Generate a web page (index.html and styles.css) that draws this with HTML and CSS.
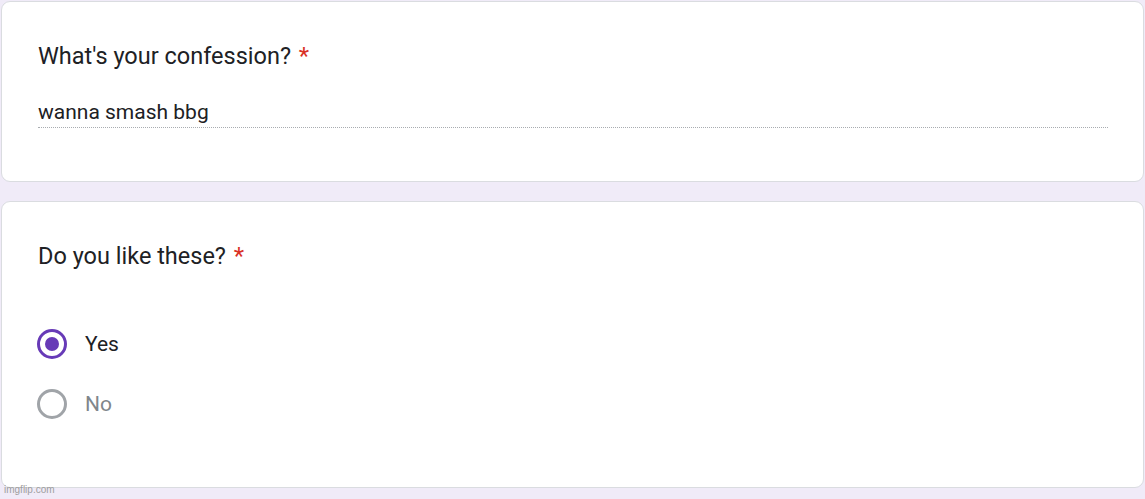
FILE: index.html
```html
<!DOCTYPE html>
<html>
<head>
<meta charset="utf-8">
<link rel="stylesheet" href="styles.css">
</head>
<body>
<div class="page">
  <div class="card card-text">
    <div class="title">What's your confession? <span class="req">*</span></div>
    <div class="answer">wanna smash bbg</div>
  </div>
  <div class="card card-radio">
    <div class="title">Do you like these? <span class="req">*</span></div>
    <div class="options">
      <div class="option">
        <span class="radio checked"><span class="dot"></span></span>
        <span class="label">Yes</span>
      </div>
      <div class="option muted">
        <span class="radio"></span>
        <span class="label">No</span>
      </div>
    </div>
  </div>
  <div class="watermark">imgflip.com</div>
</div>
</body>
</html>
```

FILE: styles.css
```css
html, body {
  margin: 0;
  padding: 0;
  background: #f0ebf8;
  font-family: Roboto, "Liberation Sans", Arial, sans-serif;
  color: #202124;
}
.page {
  width: 1145px;
  height: 499px;
  padding: 1px 1px 0 1px;
  box-sizing: border-box;
  display: flex;
  flex-direction: column;
  gap: 19px;
}
.card {
  background: #fff;
  border: 1px solid #dadce0;
  border-radius: 9px;
  box-sizing: border-box;
  padding: 0 36px;
}
.card-text {
  height: 181px;
  padding-top: 40px;
}
.card-radio {
  height: 287px;
  padding-top: 40px;
}
.title {
  font-size: 23.5px;
  line-height: 28px;
}
.req {
  color: #d93025;
  font-size: 24px;
  margin-left: 2px;
}
.answer {
  margin-top: 29px;
  font-size: 21px;
  line-height: 26px;
  padding-bottom: 2px;
  border-bottom: 1px dotted #a8acb0;
  width: 1070px;
}
.options {
  margin-top: 59px;
  display: flex;
  flex-direction: column;
  gap: 30px;
}
.option {
  display: flex;
  align-items: center;
  gap: 18px;
  height: 30px;
  margin-left: -1px;
}
.radio {
  width: 30px;
  height: 30px;
  box-sizing: border-box;
  border-radius: 50%;
  border: 3px solid #a0a4a8;
  display: flex;
  align-items: center;
  justify-content: center;
}
.radio.checked {
  border-color: #673ab7;
}
.dot {
  width: 14px;
  height: 14px;
  border-radius: 50%;
  background: #673ab7;
}
.label {
  font-size: 21px;
}
.muted .label {
  color: #80868b;
}
.watermark {
  position: absolute;
  left: 4px;
  top: 484px;
  font-size: 10px;
  color: #9e9e9e;
  font-family: "Liberation Sans", Arial, sans-serif;
}
```
